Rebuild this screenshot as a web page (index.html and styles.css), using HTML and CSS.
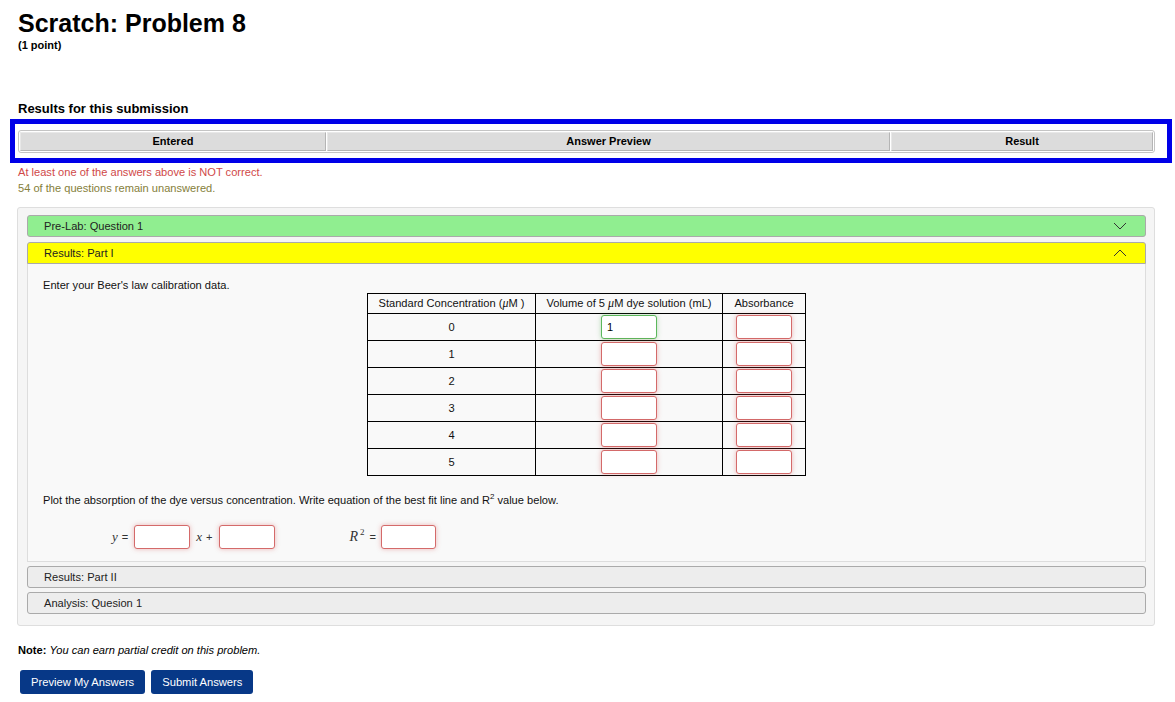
FILE: index.html
```html
<!DOCTYPE html>
<html>
<head>
<meta charset="utf-8">
<title>Scratch: Problem 8</title>
<link rel="stylesheet" href="styles.css">
</head>
<body>
<div class="page">
  <h1 class="title">Scratch: Problem 8</h1>
  <div class="points">(1 point)</div>

  <h2 class="results-title">Results for this submission</h2>
  <div class="highlight">
    <table class="attempt">
      <tr>
        <th class="c-entered">Entered</th>
        <th class="c-preview">Answer Preview</th>
        <th class="c-result">Result</th>
      </tr>
    </table>
  </div>
  <div class="msg-error">At least one of the answers above is NOT correct.</div>
  <div class="msg-warn">54 of the questions remain unanswered.</div>

  <div class="panel">
    <div class="acc-head green">Pre-Lab: Question 1
      <svg class="chev" width="14" height="8" viewBox="0 0 14 8"><path d="M1 1 L7 7 L13 1" fill="none" stroke="#333" stroke-width="1"/></svg>
    </div>
    <div class="acc-head yellow open">Results: Part I
      <svg class="chev" width="14" height="8" viewBox="0 0 14 8"><path d="M1 7 L7 1 L13 7" fill="none" stroke="#333" stroke-width="1"/></svg>
    </div>
    <div class="acc-body">
      <p class="intro">Enter your Beer's law calibration data.</p>
      <table class="data">
        <colgroup><col class="col1"><col class="col2"><col class="col3"></colgroup>
        <tr>
          <th>Standard Concentration (<span class="mu">μ</span>M )</th>
          <th>Volume of 5 <span class="mu">μ</span>M dye solution (mL)</th>
          <th>Absorbance</th>
        </tr>
        <tr><td>0</td><td><input class="ans good" value="1"></td><td><input class="ans bad"></td></tr>
        <tr><td>1</td><td><input class="ans bad"></td><td><input class="ans bad"></td></tr>
        <tr><td>2</td><td><input class="ans bad"></td><td><input class="ans bad"></td></tr>
        <tr><td>3</td><td><input class="ans bad"></td><td><input class="ans bad"></td></tr>
        <tr><td>4</td><td><input class="ans bad"></td><td><input class="ans bad"></td></tr>
        <tr><td>5</td><td><input class="ans bad"></td><td><input class="ans bad"></td></tr>
      </table>
      <p class="plot">Plot the absorption of the dye versus concentration. Write equation of the best fit line and R<sup>2</sup> value below.</p>
      <div class="eqrow">
        <span class="mi">y</span><span class="op">=</span><input class="ans bad">
        <span class="mi mx">x</span><span class="op op-plus">+</span><input class="ans bad">
        <span class="mi mr">R<sup>2</sup></span><span class="op op-r">=</span><input class="ans bad w55">
      </div>
    </div>
    <div class="acc-head grey">Results: Part II</div>
    <div class="acc-head grey">Analysis: Quesion 1</div>
  </div>

  <p class="note"><b>Note:</b> <i>You can earn partial credit on this problem.</i></p>
  <div class="buttons">
    <button class="btn">Preview My Answers</button>
    <button class="btn">Submit Answers</button>
  </div>
</div>
</body>
</html>
```

FILE: styles.css
```css
html, body {
  margin: 0;
  padding: 0;
  background: #fff;
}
body {
  font-family: "Liberation Sans", Arial, sans-serif;
  font-size: 11.1px;
  color: #111;
}
.page {
  padding: 0 20px 0 18px;
}
.title {
  margin: 8px 0 0;
  font-size: 25px;
  line-height: 30px;
  font-weight: bold;
  color: #000;
}
.points {
  font-size: 11px;
  font-weight: bold;
  line-height: 14px;
  color: #000;
}
.results-title {
  margin: 49px 0 0;
  font-size: 13px;
  line-height: 16px;
  font-weight: bold;
  color: #000;
}
.highlight {
  margin: 2px -17px 0 -8px;
  border: 5px solid #0000e8;
  padding: 6px 12px 5px 3px;
  background: #fff;
}
.attempt {
  width: 100%;
  border-collapse: separate;
  border-spacing: 1px;
  border: 1px solid #c4c4c4;
  border-radius: 3px;
  background: #fff;
}
.attempt th {
  background: #dcdcdc;
  border: 1px solid #b5b5b5;
  border-top-color: #e8e8e8;
  border-left-color: #e8e8e8;
  height: 16px;
  padding: 0 0 1px;
  line-height: 14px;
  font-size: 11px;
  font-weight: bold;
  color: #000;
  text-align: center;
}
.c-entered { width: 304px; }
.c-result { width: 260px; }
.msg-error {
  margin-top: 1px;
  line-height: 16px;
  color: #d04848;
}
.msg-warn {
  line-height: 16px;
  color: #85803a;
}
.panel {
  margin: 11px 0 0 -1px;
  background: #f5f5f5;
  border: 1px solid #dedede;
  border-radius: 3px;
  padding: 7px 8px 11px 9px;
}
.acc-head {
  position: relative;
  height: 20px;
  line-height: 20px;
  border: 1px solid #aaa;
  border-radius: 3px;
  padding-left: 16px;
  color: #222;
  margin-top: 4px;
}
.acc-head:first-child { margin-top: 0; }
.acc-head.green { background: #90ee90; margin-bottom: 5px; }
.acc-head.yellow { background: #ffff00; border-radius: 3px 3px 0 0; }
.acc-head.grey { background: #ededed; }
.chev {
  position: absolute;
  right: 18px;
  top: 6px;
}
.acc-body {
  background: #f9f9f9;
  border: 1px solid #ddd;
  border-top: none;
  padding: 14px 15px 12px;
}
.intro {
  margin: 0;
  line-height: 15px;
}
.data {
  margin: 0 auto;
  border-collapse: collapse;
  border: 1px solid #000;
}
.col1 { width: 168px; }
.col2 { width: 187px; }
.col3 { width: 83px; }
.data th {
  font-weight: normal;
  height: 19px;
  padding: 0;
  line-height: 13px;
  border: 1px solid #000;
  color: #111;
  text-align: center;
}
.data td {
  height: 26px;
  padding: 0;
  border: 1px solid #000;
  text-align: center;
}
.mu {
  font-family: "Liberation Serif", "Times New Roman", serif;
  font-style: italic;
  font-size: 12px;
  line-height: 0;
}
.ans {
  box-sizing: border-box;
  width: 56px;
  height: 24px;
  margin: 0;
  padding: 0 5px;
  vertical-align: middle;
  background: #fff;
  border: 1px solid #d46a6a;
  border-radius: 3px;
  box-shadow: 0 0 5px rgba(210, 60, 60, 0.35);
  font-family: "Liberation Sans", Arial, sans-serif;
  font-size: 11px;
  color: #000;
}
.ans.w55 { width: 55px; }
.ans.good {
  border-color: #5cb85c;
  box-shadow: 0 0 5px rgba(60, 160, 60, 0.35);
}
.plot {
  margin: 17px 0 0;
  line-height: 15px;
}
.plot sup {
  font-size: 8px;
  line-height: 0;
}
.eqrow {
  display: flex;
  align-items: center;
  margin-top: 17px;
  padding-left: 69px;
  height: 24px;
}
.mi {
  font-family: "Liberation Serif", "Times New Roman", serif;
  font-style: italic;
  font-size: 13px;
  color: #333;
}
.mi sup {
  font-style: normal;
  font-size: 9px;
  line-height: 0;
  margin-left: 2px;
}
.op {
  margin: 0 6px 0 4px;
  color: #333;
}
.op-plus { margin: 0 6px 0 4px; }
.op-r { margin: 0 5px 0 5px; }
.mx { margin-left: 6px; }
.mr { margin-left: 75px; font-size: 14px; }
.note {
  margin: 17px 0 0;
  line-height: 15px;
  color: #000;
}
.buttons {
  margin: 12px 0 0 2px;
  display: flex;
  gap: 6px;
}
.btn {
  height: 24px;
  padding: 0 11px;
  border: none;
  border-radius: 3px;
  background: #073887;
  color: #fff;
  font-family: "Liberation Sans", Arial, sans-serif;
  font-size: 11.2px;
  cursor: pointer;
}
```
